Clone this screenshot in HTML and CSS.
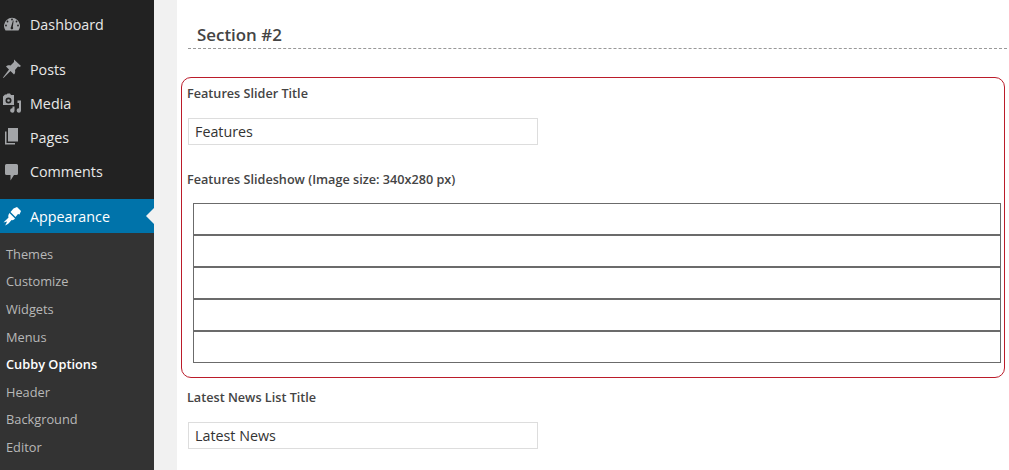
FILE: index.html
```html
<!DOCTYPE html>
<html lang="en">
<head>
  <meta charset="UTF-8">
  <meta name="viewport" content="width=device-width, initial-scale=1.0">
  <title>Cubby Options</title>
  <link rel="stylesheet" href="styles.css">
</head>
<body>
  <aside class="sidebar">
    <ul class="menu">
      <li class="menu-item">
        <svg class="menu-icon" viewBox="0 0 20 20"><path d="M3.500 16.500a8 8 0 1 1 13 0z"/><g class="icon-cut"><circle cx="10" cy="5.500" r=".9"/><circle cx="5.500" cy="7.500" r=".9"/><circle cx="14.500" cy="7.500" r=".9"/><circle cx="4" cy="11.500" r=".9"/><circle cx="16" cy="11.500" r=".9"/><path d="M11 6.500l.6.200-.8 6.400a1.300 1.300 0 1 1-1.800 0z"/></g></svg>
        Dashboard
      </li>
      <li class="menu-item menu-gap">
        <svg class="menu-icon" viewBox="0 0 20 20"><path d="M12 .5l7 6.500-1.500 1-1.500-.5-3 3.500c.5 2 0 3.500-1 4.500L8.500 12l-7 7-.5-.5L7 10.500l-3-3c1-1 3-1.500 4.500-1L12 3z"/></svg>
        Posts
      </li>
      <li class="menu-item">
        <svg class="menu-icon" viewBox="0 0 20 20"><path fill-rule="evenodd" d="M3 1.500h1.500l1-1h2.500l1 1.500h3v10H1V3.500zM6.500 4.500a3 3 0 1 0 0 6 3 3 0 0 0 0-6z"/><circle cx="6.500" cy="7.500" r="1.300"/><path d="M14 7.500h5v10a2.200 2.200 0 1 1-2-2.200V10h-1.500V7.500z"/><path d="M12.500 13.500v4a2.200 2.200 0 1 1-2-2.200v-1.800z"/></svg>
        Media
      </li>
      <li class="menu-item">
        <svg class="menu-icon" viewBox="0 0 20 20"><path d="M6 1h10v13.500H6z"/><path d="M4.500 4.500V16H13v1.500H3v-13z"/></svg>
        Pages
      </li>
      <li class="menu-item">
        <svg class="menu-icon" viewBox="0 0 20 20"><path d="M4.500 3h10A1.500 1.500 0 0 1 16 4.500v8a1.500 1.500 0 0 1-1.500 1.500H12l-3.500 5.500V14h-4A1.500 1.500 0 0 1 3 12.500v-8A1.500 1.500 0 0 1 4.500 3z"/></svg>
        Comments
      </li>
      <li class="menu-item menu-gap is-current">
        <svg class="menu-icon" viewBox="0 0 20 20"><path d="M11.500 2.500L15 1l4 4-1.500 3.500-1.500-.5-2.500 3L8.500 6z"/><path d="M7.500 7l5.500 5.500c-1 1.500-2.500 2-3.500 1.500-1.500 2-3.500 4.500-6.500 5.500 1-1.500 1.800-3 2-4l-3.500 1C3 15 5 13 6.500 11.500 6 10 6.300 8.500 7.500 7z"/></svg>
        Appearance
      </li>
    </ul>
    <ul class="submenu">
      <li>Themes</li>
      <li>Customize</li>
      <li>Widgets</li>
      <li>Menus</li>
      <li class="is-current">Cubby Options</li>
      <li>Header</li>
      <li>Background</li>
      <li>Editor</li>
    </ul>
  </aside>

  <main class="content">
    <h2 class="section-title">Section #2</h2>

    <div class="highlight">
      <label class="field-label" for="sliderTitle">Features Slider Title</label>
      <input class="field-input" type="text" id="sliderTitle" value="Features">

      <p class="field-label slideshow-label">Features Slideshow (Image size: 340x280 px)</p>
      <div class="slides">
        <div class="slide"></div>
        <div class="slide"></div>
        <div class="slide"></div>
        <div class="slide"></div>
        <div class="slide"></div>
      </div>
    </div>

    <div class="after">
      <label class="field-label" for="newsTitle">Latest News List Title</label>
      <input class="field-input" type="text" id="newsTitle" value="Latest News">
    </div>
  </main>
</body>
</html>
```

FILE: styles.css
```css
/* Global Styles */
html, body {
  height: 100%;
}

body {
  margin: 0;
  display: flex;
  height: 100vh;
  overflow: hidden;
  background: #f1f1f1;
  font-family: 'Open Sans', sans-serif;
  color: #444;
}

/* Admin Sidebar */
.sidebar {
  width: 154px;
  flex-shrink: 0;
  background: #222;
  padding-top: 7px;
  box-sizing: border-box;
}

.menu, .submenu {
  list-style: none;
  margin: 0;
  padding: 0;
}

.menu-item {
  display: flex;
  align-items: center;
  gap: 8px;
  height: 34px;
  padding-left: 2px;
  font-size: 14.300px;
  color: #e8e8e8;
}

.menu-gap {
  margin-top: 11px;
}

.menu-item.is-current {
  position: relative;
  margin-top: 11px;
  background: #0073aa;
  color: #fff;
}

.menu-item.is-current::after {
  content: "";
  position: absolute;
  right: 0;
  top: 9px;
  border: 8px solid transparent;
  border-left-width: 0;
  border-right-color: #f1f1f1;
}

.menu-icon {
  width: 20px;
  height: 20px;
  flex-shrink: 0;
  fill: #a3a5a8;
}

.menu-icon .icon-cut {
  fill: #222;
}

.is-current .menu-icon {
  fill: #fff;
}

.submenu {
  background: #333;
  padding-top: 7.800px;
  height: 237px;
}

.submenu li {
  height: 27.600px;
  line-height: 27.600px;
  padding-left: 6px;
  font-size: 12.800px;
  color: #b8b8b8;
}

.submenu li.is-current {
  color: #fff;
  font-weight: 600;
}

/* Options Panel */
.content {
  flex: 1;
  margin-left: 23px;
  background: #fff;
  padding: 0 2px 0 4px;
  min-width: 0;
}

.section-title {
  margin: 0 0 28px 7px;
  height: 48px;
  padding: 0 0 0 9px;
  border-bottom: 1px dashed #999;
  font-size: 16.900px;
  font-weight: 600;
  line-height: 70px;
  color: #444;
}

.highlight {
  width: 824px;
  height: 301px;
  box-sizing: border-box;
  padding: 7px 3px 0 5px;
  border: 1px solid #bb1c2a;
  border-radius: 10px;
}

.field-label {
  display: block;
  margin: 0;
  font-size: 12.650px;
  font-weight: 600;
  line-height: 17px;
  color: #444;
}

.field-input {
  display: block;
  width: 350px;
  height: 27px;
  margin: 16px 0 0 1px;
  padding: 0 6px;
  box-sizing: border-box;
  border: 1px solid #ddd;
  font-family: inherit;
  font-size: 14.300px;
  color: #333;
  background: #fff;
  outline: none;
}

.slideshow-label {
  margin-top: 26px;
}

.slides {
  margin: 15px 0 0 6px;
  width: 808px;
  border: 1px solid #6b6b6b;
  box-sizing: border-box;
}

.slide {
  height: 30px;
  border-bottom: 2px solid #6b6b6b;
}

.slide:last-child {
  border-bottom: 0;
}

.after {
  padding: 11px 0 0 6px;
}
```
